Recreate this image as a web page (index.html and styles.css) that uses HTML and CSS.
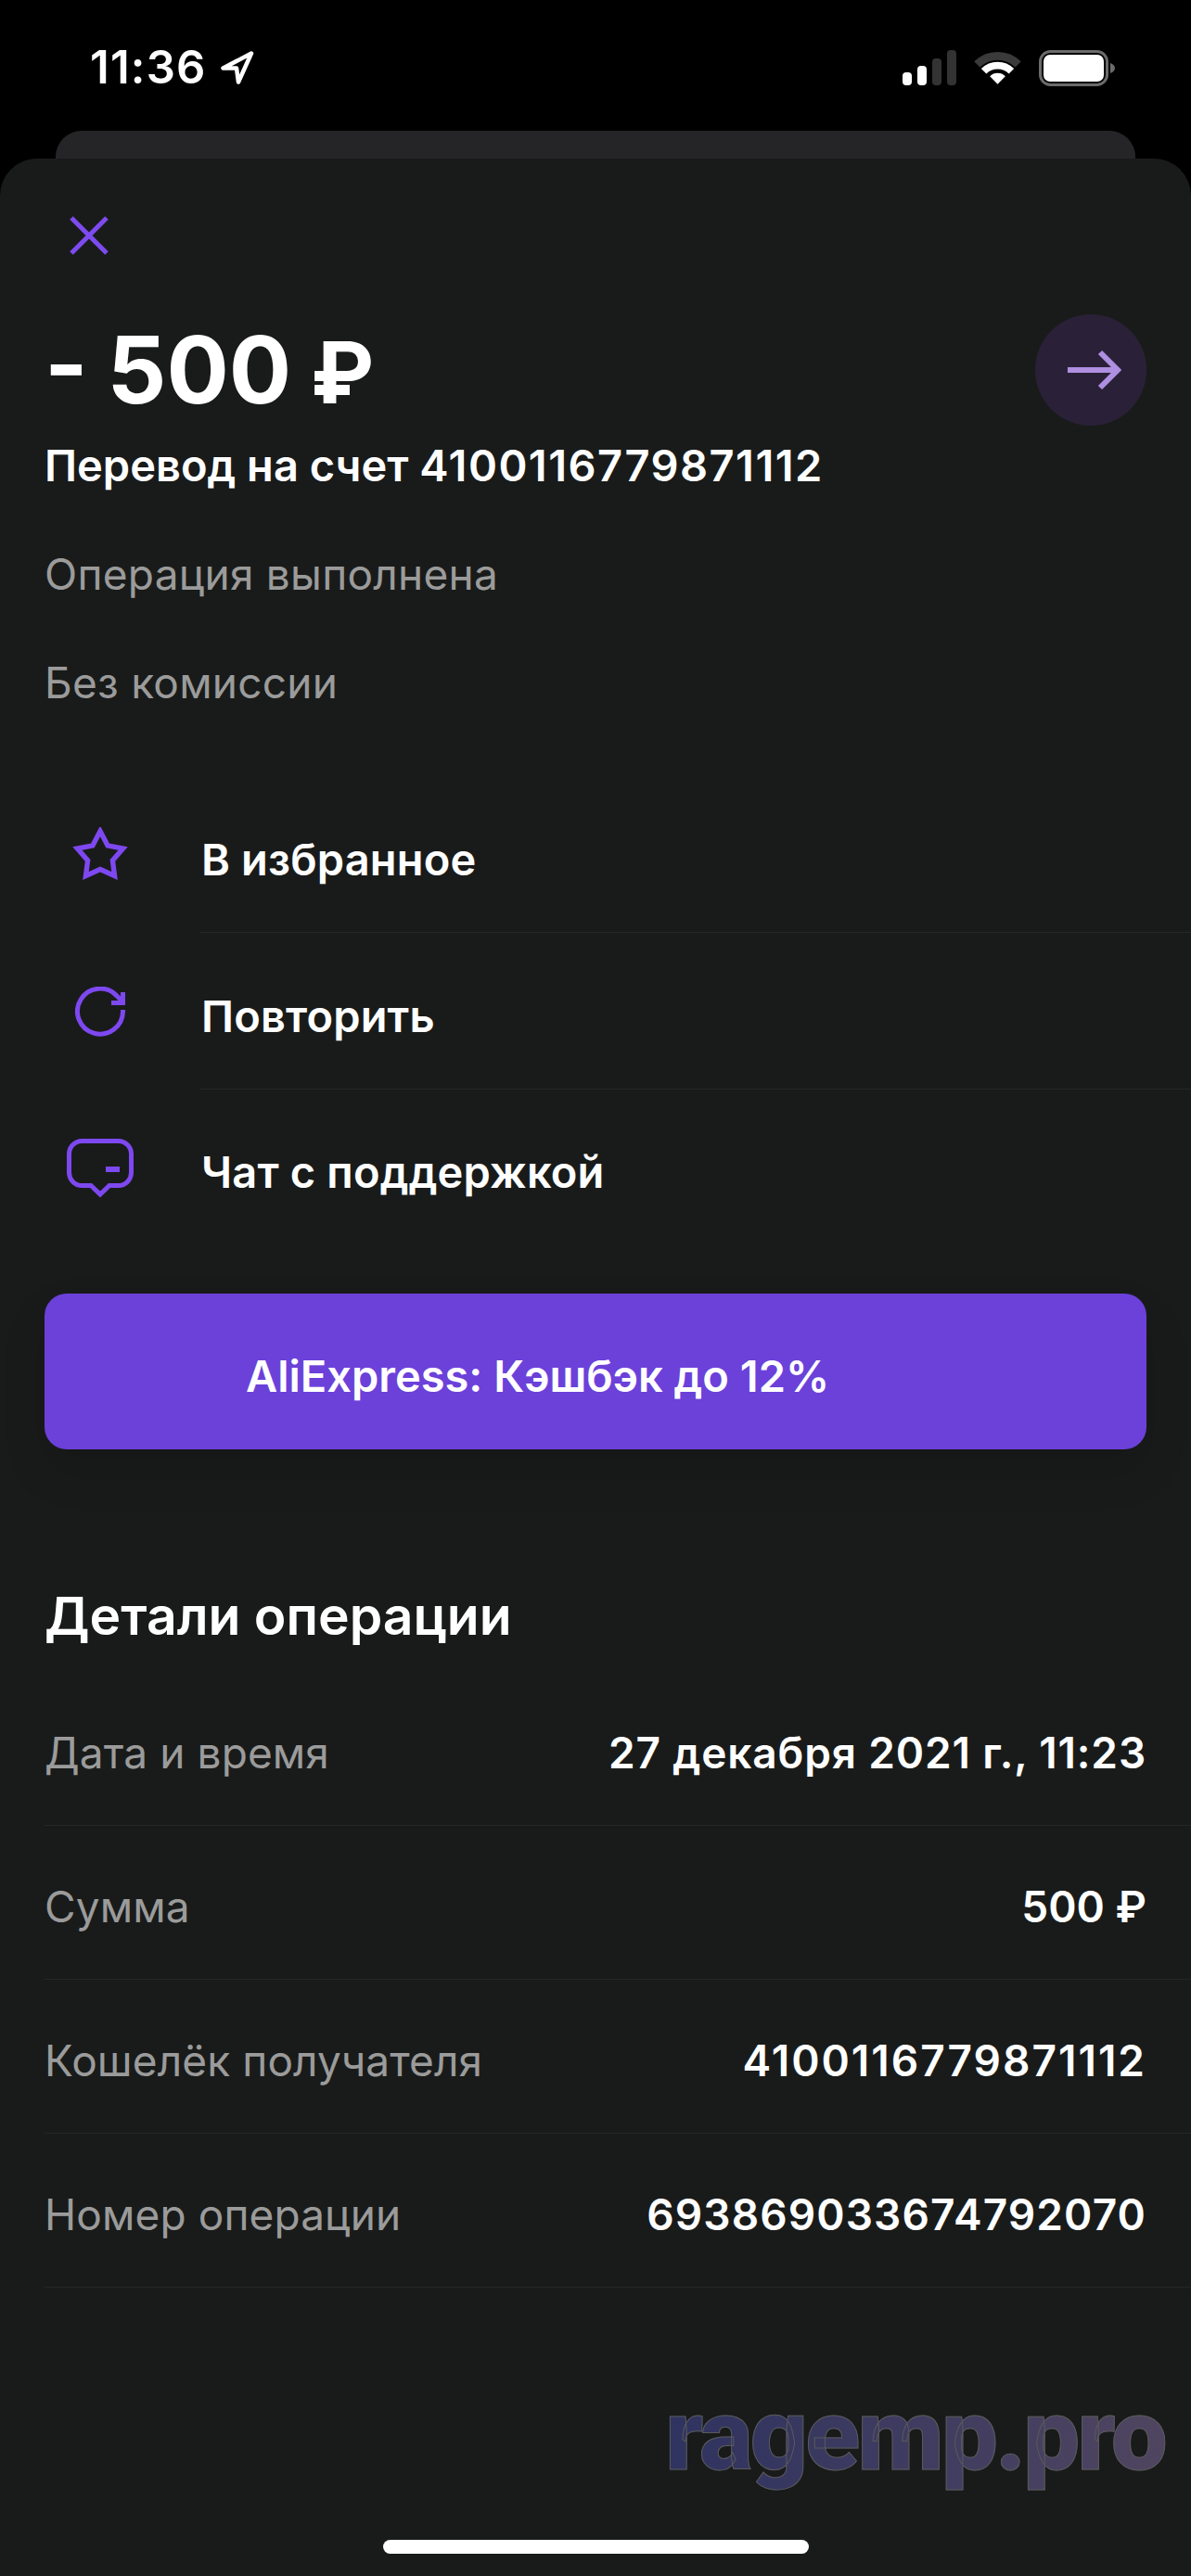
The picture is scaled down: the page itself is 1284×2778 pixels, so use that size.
FILE: index.html
```html
<!DOCTYPE html>
<html lang="ru">
  <head>
    <meta charset="UTF-8" />
    <meta name="viewport" content="width=device-width, initial-scale=1.0" />
    <title>Детали операции</title>
    <link rel="stylesheet" href="styles.css">
  </head>
  <body>
    <div class="status">
      <div class="status-left">
        <span class="time">11:36</span>
        <svg width="38" height="38" viewBox="0 0 38 38">
          <path d="M34 3.5 L3.5 19.5 H18 L20 34.5 Z" fill="none" stroke="#fff" stroke-width="4.5" stroke-linejoin="round" />
        </svg>
      </div>
      <div class="status-right">
        <svg width="58" height="38" viewBox="0 0 58 38">
          <rect x="0" y="24" width="10" height="14" rx="4" fill="#fff" />
          <rect x="16" y="17" width="10" height="21" rx="4" fill="#fff" />
          <rect x="32" y="9" width="10" height="29" rx="4" fill="#333" />
          <rect x="48" y="0" width="10" height="38" rx="4" fill="#333" />
        </svg>
        <svg width="51" height="38" viewBox="0 0 52 38">
          <path d="M3.4 15.4 A32 32 0 0 1 48.6 15.4" fill="none" stroke="#3a3a3a" stroke-width="9" />
          <path d="M10.8 22.8 A21.5 21.5 0 0 1 41.2 22.8" fill="none" stroke="#fff" stroke-width="8" />
          <path d="M26 37 L17.5 28.5 A12 12 0 0 1 34.5 28.5 Z" fill="#fff" />
        </svg>
        <svg width="82" height="39" viewBox="0 0 82 39">
          <rect x="1.5" y="1.5" width="72" height="36" rx="11" fill="none" stroke="#6b6b6b" stroke-width="3" />
          <rect x="5" y="5" width="65" height="29" rx="7" fill="#fff" />
          <path d="M77 14 C80 15 82 17 82 19.5 C82 22 80 24 77 25 Z" fill="#6b6b6b" />
        </svg>
      </div>
    </div>

    <div class="back-card"></div>

    <div class="sheet">
      <svg class="close" width="42" height="42" viewBox="0 0 42 42">
        <path d="M2 2 L40 40 M40 2 L2 40" fill="none" stroke="#7d4bef" stroke-width="5" />
      </svg>

      <div class="head">
        <div>
          <div class="amount">- 500 <span class="ruble">₽</span></div>
          <div class="subtitle">Перевод на счет <span class="account">4100116779871112</span></div>
        </div>
        <div class="round-btn">
          <svg width="58" height="44" viewBox="0 0 58 44">
            <path d="M0 22 H54 M35 3 L54 22 L35 41" fill="none" stroke="#ae8fe0" stroke-width="6" />
          </svg>
        </div>
      </div>

      <div class="note first">Операция выполнена</div>
      <div class="note">Без комиссии</div>

      <ul class="actions">
        <li>
          <span class="action-icon">
            <svg width="60" height="60" viewBox="2 3 56 56">
              <path d="M30 7 L37.5 21.5 L53 24.5 L42.5 36.5 L44.5 52 L30 45.5 L15.5 52 L17.5 36.5 L7 24.5 L22.5 21.5 Z" fill="none" stroke="#7e48f0" stroke-width="5" stroke-miterlimit="8" />
            </svg>
          </span>
          <span class="action-label">В избранное</span>
        </li>
        <li>
          <span class="action-icon">
            <svg width="54" height="54" viewBox="0 0 54 54">
              <path d="M51.5 25 V27 A24.5 24.5 0 1 1 45 10 L51 16" fill="none" stroke="#7e48f0" stroke-width="5" />
              <path d="M51.5 6 V17.5 H39" fill="none" stroke="#7e48f0" stroke-width="5" />
            </svg>
          </span>
          <span class="action-label">Повторить</span>
        </li>
        <li>
          <span class="action-icon">
            <svg width="72" height="64" viewBox="0 0 72 64">
              <path d="M16.5 2.5 H55.5 A14 14 0 0 1 69.5 16.5 V36.5 A14 14 0 0 1 55.5 50.5 H46 L36 60 L26 50.5 H16.5 A14 14 0 0 1 2.5 36.5 V16.5 A14 14 0 0 1 16.5 2.5 Z" fill="none" stroke="#7e48f0" stroke-width="5" />
              <rect x="42" y="30" width="15" height="6" fill="#7e48f0" />
            </svg>
          </span>
          <span class="action-label">Чат с поддержкой</span>
        </li>
      </ul>

      <div class="promo">AliExpress: Кэшбэк до 12%</div>

      <h2 class="details-title">Детали операции</h2>

      <dl class="details">
        <div class="details-row">
          <dt>Дата и время</dt>
          <dd class="date">27 декабря 2021 г., 11:23</dd>
        </div>
        <div class="details-row">
          <dt>Сумма</dt>
          <dd>500 ₽</dd>
        </div>
        <div class="details-row">
          <dt>Кошелёк получателя</dt>
          <dd class="account">4100116779871112</dd>
        </div>
        <div class="details-row">
          <dt>Номер операции</dt>
          <dd class="op-id">693869033674792070</dd>
        </div>
      </dl>

      <div class="watermark">ragemp.pro</div>
      <div class="home-bar"></div>
    </div>
  </body>
</html>
```

FILE: styles.css
```css
* {
  padding: 0;
  margin: 0;
  box-sizing: border-box;
}
body {
  width: 1284px;
  height: 2778px;
  overflow: hidden;
  background-color: #000;
  color: #fff;
  font-family: Inter, "Noto Sans", sans-serif;
}
svg {
  display: block;
}
li {
  list-style: none;
}

/* status bar */
.status {
  display: flex;
  justify-content: space-between;
  align-items: center;
  height: 141px;
  padding: 43px 82px 38px 97px;
}
.status-left {
  display: flex;
  align-items: center;
  gap: 14px;
}
.time {
  font-size: 49px;
  font-weight: 600;
  line-height: 60px;
  letter-spacing: 1.2px;
}
.status-right {
  display: flex;
  align-items: center;
  gap: 19px;
}

.back-card {
  height: 30px;
  margin: 0 60px;
  background-color: #252527;
  border-radius: 28px 28px 0 0;
}

.sheet {
  position: relative;
  height: 2607px;
  padding-top: 62px;
  background-color: #191b1a;
  border-radius: 40px 40px 0 0;
}
.close {
  margin-left: 75px;
}

/* head */
.head {
  display: flex;
  justify-content: space-between;
  align-items: flex-start;
  margin-top: 64px;
  padding: 0 48px;
}
.amount {
  font-size: 100px;
  font-weight: 700;
  line-height: 120px;
  word-spacing: -3px;
}
.ruble {
  font-size: 92px;
  line-height: 0;
}
.subtitle {
  margin-top: 13px;
  font-size: 47px;
  font-weight: 600;
  line-height: 60px;
}
.subtitle .account {
  letter-spacing: 1.45px;
}
.round-btn {
  display: flex;
  justify-content: center;
  align-items: center;
  width: 120px;
  height: 120px;
  padding-left: 7px;
  border-radius: 50%;
  background-color: #2a2138;
}
.note {
  margin-top: 57px;
  padding-left: 48px;
  font-size: 46px;
  line-height: 60px;
  letter-spacing: 0.25px;
  color: #9b9b9b;
}

/* actions */
.actions {
  margin-top: 71px;
}
.actions li {
  display: flex;
  align-items: center;
  height: 169px;
}
.action-icon {
  display: flex;
  justify-content: center;
  width: 216px;
}
.action-label {
  display: flex;
  flex: 1;
  align-items: center;
  height: 100%;
  padding: 10px 0 0 1px;
  border-bottom: 1px solid #252726;
  font-size: 47px;
  font-weight: 600;
  letter-spacing: 0.15px;
}
.actions li:last-child .action-label {
  padding-top: 8px;
  border-bottom: 0;
}

.promo {
  display: flex;
  align-items: center;
  height: 168px;
  margin: 51px 48px 0;
  padding: 8px 0 0 217px;
  background-color: #6b41da;
  border-radius: 24px;
  box-shadow: 0 24px 48px rgba(0, 0, 0, 0.12);
  font-size: 47px;
  font-weight: 600;
}

/* details */
.details-title {
  margin-top: 146px;
  padding-left: 48px;
  font-size: 57px;
  font-weight: 600;
  line-height: 68px;
}
.details {
  margin-top: 26px;
  margin-left: 48px;
}
.details-row {
  display: flex;
  justify-content: space-between;
  align-items: center;
  height: 166px;
  padding: 9px 48px 0 0;
  border-bottom: 1px solid #252726;
  font-size: 46px;
}
.details-row dt {
  color: #9b9b9b;
  letter-spacing: 0.1px;
}
.details-row dd {
  font-weight: 600;
}
.details-row .date {
  letter-spacing: 0.85px;
}
.details-row .account {
  letter-spacing: 2px;
}
.details-row .op-id {
  letter-spacing: 1.1px;
}

/* overlays */
.watermark {
  position: absolute;
  right: 28px;
  top: 2395px;
  font-family: Roboto, "Liberation Sans", sans-serif;
  font-size: 108px;
  font-weight: 900;
  line-height: 120px;
  letter-spacing: -2.6px;
  background: linear-gradient(90deg, #2f3360, #4f4560);
  -webkit-background-clip: text;
  background-clip: text;
  -webkit-text-fill-color: transparent;
  -webkit-text-stroke: 1px #5a5a5a;
}
.home-bar {
  position: absolute;
  left: 413px;
  bottom: 24px;
  width: 459px;
  height: 15px;
  border-radius: 8px;
  background-color: #fff;
}
```
